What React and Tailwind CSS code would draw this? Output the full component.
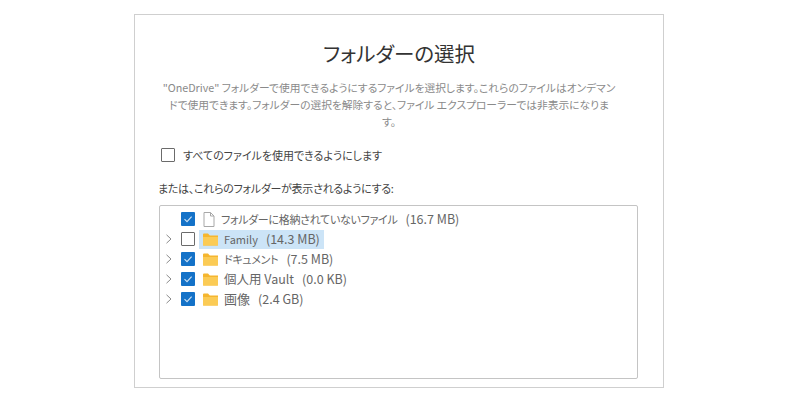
import React from "react";

const FONT = "font-['Noto_Sans_CJK_JP','Noto_Sans',sans-serif] [font-feature-settings:'palt']";

const CheckBox = ({ checked }) => (
  <span
    className={`w-[14px] h-[14px] shrink-0 flex items-center justify-center rounded-[1px] ${
      checked ? "bg-[#1472c8]" : "border border-[#6b6b6b] bg-white"
    }`}
  >
    {checked && (
      <svg width="10" height="10" viewBox="0 0 10 10" fill="none">
        <path d="M1.5 5.2 L4 7.6 L8.6 2.6" stroke="#cfe3f5" strokeWidth="1.1" />
      </svg>
    )}
  </span>
);

const Chevron = () => (
  <svg width="8" height="10" viewBox="0 0 8 10" fill="none">
    <path d="M1.5 0.8 L6 5 L1.5 9.2" stroke="#8a8a8a" strokeWidth="1" />
  </svg>
);

const FolderIcon = () => (
  <svg width="15" height="13" viewBox="0 0 15 13" className="shrink-0">
    <path d="M0 1.5 Q0 0.5 1 0.5 H5 L6.8 2.4 H15 V12 Q15 12.5 14 12.5 H1 Q0 12.5 0 12 Z" fill="#f5b62f" />
    <path d="M0 4 H15 V12 Q15 12.5 14 12.5 H1 Q0 12.5 0 12 Z" fill="#fbcb55" />
  </svg>
);

const FileIcon = () => (
  <svg width="12" height="15" viewBox="0 0 12 15" fill="none" className="shrink-0">
    <path d="M1 0.5 H7.5 L11 4 V14.5 H1 Z" fill="#fff" stroke="#a8a8a8" />
    <path d="M7.5 0.5 V4 H11" stroke="#a8a8a8" />
  </svg>
);

const rows = [
  { label: "フォルダーに格納されていないファイル", size: "(16.7 MB)", checked: true, file: true, text: "text-[11px] tracking-[-0.3px]" },
  { label: "Family", size: "(14.3 MB)", checked: false, selected: true, text: "text-[11px]" },
  { label: "ドキュメント", size: "(7.5 MB)", checked: true, text: "text-[11px] tracking-[-0.3px]" },
  { label: "個人用 Vault", size: "(0.0 KB)", checked: true, text: "text-[12.5px]" },
  { label: "画像", size: "(2.4 GB)", checked: true, text: "text-[13px]" },
];

export default function App() {
  return (
    <div className={`w-[800px] h-[400px] bg-white overflow-hidden pt-[14px] pl-[134px] ${FONT}`}>
      <div className="w-[530px] h-[374px] border border-[#cfcfcf] flex flex-col">
        <h1 className="mt-[22px] text-center text-[20.5px] leading-[32px] text-[#333333]">フォルダーの選択</h1>
        <p className="mt-[10px] pr-[20px] text-center text-[10.75px] leading-[17px] text-[#8a8a8a]">
          "OneDrive" フォルダーで使用できるようにするファイルを選択します。これらのファイルはオンデマン
          <br />
          ドで使用できます。フォルダーの選択を解除すると、ファイル エクスプローラーでは非表示になりま
          <br />
          す。
        </p>
        <div className="mt-[17px] ml-[26px] flex items-center gap-[8px] h-[16px]">
          <CheckBox />
          <span className="text-[11px] text-[#444444]">すべてのファイルを使用できるようにします</span>
        </div>
        <p className="mt-[16px] ml-[23px] text-[11px] leading-[18px] tracking-[-0.28px] text-[#444444]">
          または、これらのフォルダーが表示されるようにする:
        </p>
        <div className="mt-[8px] ml-[24px] w-[479px] h-[174px] border border-[#c4c4c4] rounded-[2px] pt-[3px] flex flex-col">
          {rows.map((row) => (
            <div key={row.label} className="h-[20px] flex items-center text-[#666666]">
              <span className="w-[21px] pl-[5px] flex items-center">{!row.file && <Chevron />}</span>
              <CheckBox checked={row.checked} />
              <span
                className={`ml-[4px] h-[19px] pl-[4px] pr-[4px] flex items-center gap-[5px] ${
                  row.selected ? "bg-[#cce4f7]" : ""
                }`}
              >
                {row.file ? <FileIcon /> : <FolderIcon />}
                <span className={`ml-[1px] ${row.text}`}>{row.label}</span>
                <span className="ml-[3px] text-[12.5px]">{row.size}</span>
              </span>
            </div>
          ))}
        </div>
      </div>
    </div>
  );
}
